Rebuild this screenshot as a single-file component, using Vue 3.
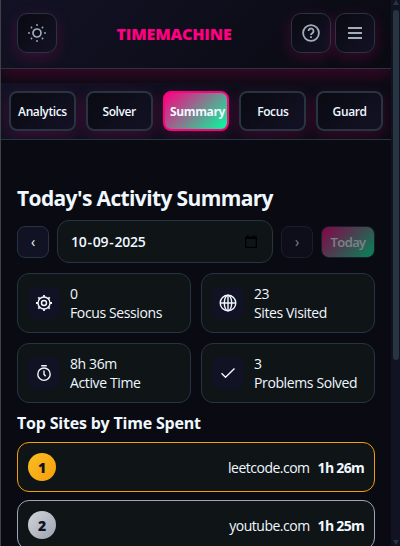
<script setup>
const tabs = ['Analytics', 'Solver', 'Summary', 'Focus', 'Guard']
const stats = [
  { icon: 'target', value: '0', label: 'Focus Sessions' },
  { icon: 'globe', value: '23', label: 'Sites Visited' },
  { icon: 'timer', value: '8h 36m', label: 'Active Time' },
  { icon: 'check', value: '3', label: 'Problems Solved' },
]
const sites = [
  { name: 'leetcode.com', time: '1h 26m', tier: 'gold' },
  { name: 'youtube.com', time: '1h 25m', tier: 'silver' },
]
</script>

<template>
  <div class="popup">
    <div class="page">
      <header class="header">
        <button class="icon-btn" aria-label="Theme">
          <svg width="20" height="20" viewBox="0 0 20 20" fill="none" stroke="currentColor" stroke-width="1.7">
            <circle cx="10" cy="10" r="4" />
            <g fill="currentColor" stroke="none">
              <circle cx="10" cy="2" r=".9" /><circle cx="10" cy="18" r=".9" />
              <circle cx="2" cy="10" r=".9" /><circle cx="18" cy="10" r=".9" />
              <circle cx="4.500" cy="4.500" r=".9" /><circle cx="15.500" cy="4.500" r=".9" />
              <circle cx="4.500" cy="15.500" r=".9" /><circle cx="15.500" cy="15.500" r=".9" />
            </g>
          </svg>
        </button>
        <h1 class="brand">TIMEMACHINE</h1>
        <div class="actions">
          <button class="icon-btn" aria-label="Help">
            <svg width="20" height="20" viewBox="0 0 20 20" fill="none" stroke="currentColor" stroke-width="1.8">
              <circle cx="10" cy="10" r="7.900" />
              <path d="M7.500 8a2.500 2.500 0 1 1 4 2c-1 .7-1.500 1.100-1.500 2.100M10 13.300v1.600" />
            </svg>
          </button>
          <button class="icon-btn" aria-label="Menu">
            <svg width="20" height="20" viewBox="0 0 20 20" fill="none" stroke="currentColor" stroke-width="1.900">
              <path d="M3 5h14M3 10h14M3 15h14" />
            </svg>
          </button>
        </div>
      </header>

      <nav class="tabs">
        <button v-for="tab in tabs" :key="tab" class="tab" :class="{ active: tab === 'Summary' }">
          <span>{{ tab }}</span>
        </button>
      </nav>

      <main class="content">
        <h2 class="title">Today's Activity Summary</h2>
        <div class="date-row">
          <button class="step">‹</button>
          <div class="date">
            <span class="date-text">10<i>-</i>09<i>-</i>2025</span>
            <svg width="12" height="13" viewBox="0 0 12 13">
              <path fill="#000" fill-rule="evenodd" d="M2 0h1.500v1.500h5V0H10v1.500h1q1 0 1 1V12q0 1-1 1H1q-1 0-1-1V2.500q0-1 1-1h1zM1.300 4v7.700h9.400V4z" />
            </svg>
          </div>
          <button class="step faded">›</button>
          <button class="today faded"><span>Today</span></button>
        </div>

        <section class="stats">
          <div v-for="stat in stats" :key="stat.label" class="stat">
            <div class="stat-icon">
              <svg width="18" height="18" viewBox="0 0 18 18" fill="none" stroke="currentColor" stroke-width="1.400">
                <template v-if="stat.icon === 'target'">
                  <circle cx="9" cy="9" r="6" /><circle cx="9" cy="9" r="2.500" />
                  <path stroke-width="1.800" d="M9 1v2M9 15v2M1 9h2M15 9h2M3.300 3.300l1.300 1.300M13.400 13.400l1.300 1.300M3.300 14.700l1.300-1.300M13.400 4.600l1.300-1.300" />
                </template>
                <template v-else-if="stat.icon === 'globe'">
                  <circle cx="9" cy="9" r="7.800" /><ellipse cx="9" cy="9" rx="3.700" ry="7.800" />
                  <path d="M1.500 9h15M9 1.500v15" />
                </template>
                <template v-else-if="stat.icon === 'timer'">
                  <circle cx="9" cy="10.200" r="6.200" />
                  <path d="M6.200 1.700h5.600M9 6.500v3.700l1.600 2" />
                </template>
                <path v-else d="M2.500 9.300l4 4L15.500 4.500" />
              </svg>
            </div>
            <div class="stat-text">
              <div>{{ stat.value }}</div>
              <div>{{ stat.label }}</div>
            </div>
          </div>
        </section>

        <h3 class="subtitle">Top Sites by Time Spent</h3>
        <ol class="sites">
          <li v-for="(site, i) in sites" :key="site.name" class="site" :class="site.tier">
            <span class="rank">{{ i + 1 }}</span>
            <span class="name">{{ site.name }}</span>
            <strong class="time">{{ site.time }}</strong>
          </li>
        </ol>
      </main>
    </div>
    <div class="scrollbar">
      <span class="arrow up"></span>
      <span class="thumb"></span>
      <span class="arrow down"></span>
    </div>
  </div>
</template>

<style>
body { background: #0a0a12; }
</style>

<style scoped>
* { box-sizing: border-box; }
.popup {
  display: flex;
  width: 400px;
  height: 546px;
  overflow: hidden;
  border-left: 1px solid #404047;
  background: #0a0a12;
  color: #f0f8ff;
  font-family: "Open Sans", "Noto Sans", sans-serif;
}
button {
  display: flex;
  align-items: center;
  justify-content: center;
  padding: 0;
  font-family: inherit;
  color: inherit;
}
svg { display: block; flex: none; }
.page { width: 390px; flex: none; overflow: hidden; }
.header {
  display: flex;
  align-items: center;
  justify-content: space-between;
  height: 69px;
  padding: 0 16px 2px;
  border-bottom: 1px solid #263541;
  background: linear-gradient(135deg, #121225, #0a0a12);
  box-shadow: 0 4px 20px rgba(255, 0, 128, .25);
}
.icon-btn {
  width: 40px;
  height: 40px;
  border: 1px solid #263541;
  border-radius: 10px;
  background: linear-gradient(135deg, #0a0a12, #121225);
  color: #a3adb8;
  box-shadow: 0 4px 15px rgba(255, 0, 128, .2);
}
.brand {
  margin: 2px 0 0;
  color: #ff0080;
  font-size: 16px;
  font-weight: 800;
  line-height: 20px;
  letter-spacing: -.15px;
}
.actions { display: flex; gap: 4px; }
.tabs {
  position: relative;
  display: grid;
  grid-template-columns: repeat(5, minmax(0, 1fr));
  gap: 10px;
  height: 57px;
  margin-top: 14px;
  padding: 8px;
  border-bottom: 1px solid #263541;
  background: linear-gradient(135deg, #121225, #0a0a12);
  overflow: hidden;
}
.tab {
  height: 40px;
  border: 2px solid #263541;
  border-radius: 8px;
  background: linear-gradient(135deg, #0a0a12, #121225);
  font-size: 12px;
  font-weight: 600;
  letter-spacing: -.4px;
  box-shadow: 0 4px 15px rgba(255, 0, 128, .2);
}
.tab.active {
  padding-left: 3px;
  border-color: #ff0080;
  background: linear-gradient(135deg, #ff0080, #00ff9f);
  font-weight: 700;
}
.content { padding: 44px 16px 0; }
.title {
  margin: 0;
  font-size: 21px;
  font-weight: 700;
  line-height: 28px;
  letter-spacing: -.63px;
  white-space: nowrap;
}
.date-row { display: flex; align-items: center; gap: 8px; margin-top: 8px; height: 43px; }
.step {
  width: 32px;
  height: 32px;
  border: 1px solid #263541;
  border-radius: 8px;
  background: #121225;
  font-size: 14px;
}
.faded { opacity: .5; }
.date {
  display: flex;
  align-items: center;
  justify-content: space-between;
  width: 216px;
  height: 43px;
  padding: 0 15px 0 13px;
  border: 1px solid #263541;
  border-radius: 12px;
  background: #0f1417;
  font-size: 14px;
  font-weight: 600;
}
.date-text { letter-spacing: -.25px; }
.date-text i { padding: 0 1px; font-style: normal; }
.today {
  width: 54px;
  height: 32px;
  border: 1px solid #263541;
  border-radius: 8px;
  background: linear-gradient(135deg, #ff0080, #00ff9f);
  font-size: 13px;
  font-weight: 600;
  letter-spacing: -.6px;
}
.stats { display: grid; grid-template-columns: 1fr 1fr; gap: 10px; margin-top: 10px; }
.stat {
  display: flex;
  align-items: center;
  gap: 10px;
  height: 60px;
  padding: 0 10px;
  border: 1px solid #263541;
  border-radius: 12px;
  background: #0f1417;
}
.stat-icon {
  display: grid;
  place-items: center;
  flex: none;
  width: 32px;
  height: 32px;
  border-radius: 8px;
  background: #121225;
}
.stat-text { font-size: 14px; line-height: 19px; letter-spacing: -.38px; white-space: nowrap; }
.subtitle { margin: 9px 0 0; font-size: 16px; font-weight: 700; line-height: 22px; letter-spacing: -.2px; }
.sites { list-style: none; margin: 8px 0 0; padding: 0; display: grid; gap: 8px; }
.site {
  display: flex;
  align-items: center;
  height: 50px;
  padding: 0 10px;
  border: 1px solid #a0a5b5;
  border-radius: 12px;
  background: #0f1417;
  font-size: 14px;
}
.site.gold { border-color: #f59e0b; }
.rank {
  display: grid;
  place-items: center;
  width: 28px;
  height: 28px;
  border-radius: 50%;
  background: linear-gradient(135deg, #d1d5db, #9ca3af);
  color: #111125;
  font-weight: 800;
}
.gold .rank { background: linear-gradient(135deg, #fbbf24, #f59e0b); }
.name { margin-left: auto; letter-spacing: -.5px; }
.time { margin-left: 8px; letter-spacing: -.7px; font-weight: 700; }
.scrollbar {
  display: flex;
  flex-direction: column;
  align-items: center;
  width: 9px;
  height: 546px;
  background: #121225;
}
.arrow { border: 3px solid transparent; }
.up { margin-top: -1px; border-bottom: 5px solid #263541; border-top-width: 1px; }
.thumb { width: 6px; height: 350px; margin-top: 5px; border-radius: 3px; background: #263541; }
.down { margin-top: auto; border-top: 5px solid #263541; border-bottom-width: 1px; }
</style>
